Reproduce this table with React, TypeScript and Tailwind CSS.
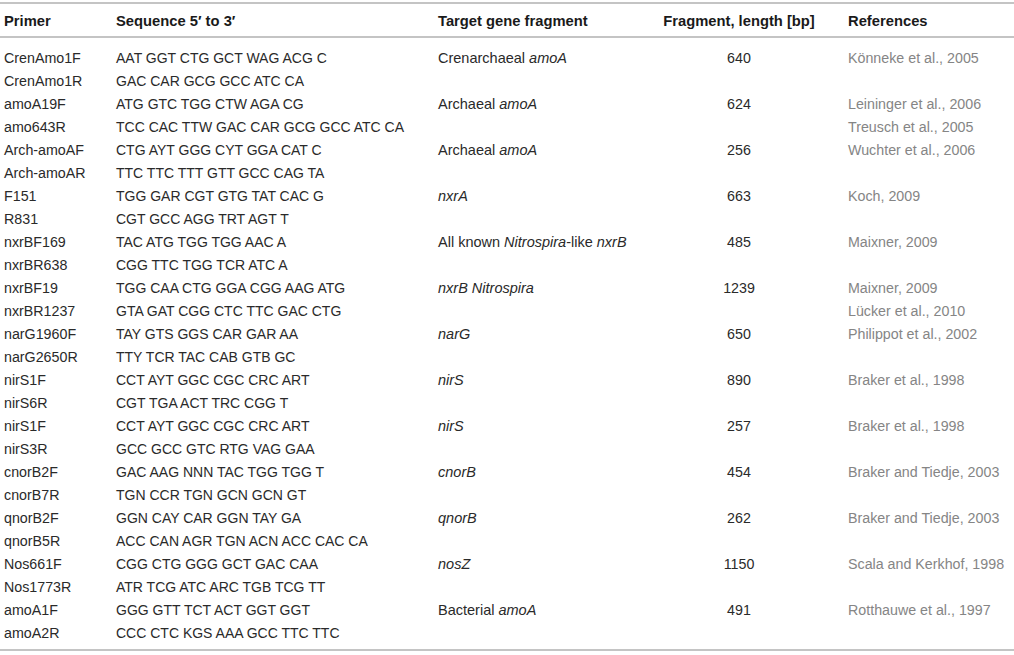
import React from "react";

type Row = {
  primer: string;
  seq: string;
  target?: React.ReactNode;
  len?: string;
  ref?: string;
};

const rows: Row[] = [
  { primer: "CrenAmo1F", seq: "AAT GGT CTG GCT WAG ACG C", target: <>Crenarchaeal <i>amoA</i></>, len: "640", ref: "Könneke et al., 2005" },
  { primer: "CrenAmo1R", seq: "GAC CAR GCG GCC ATC CA" },
  { primer: "amoA19F", seq: "ATG GTC TGG CTW AGA CG", target: <>Archaeal <i>amoA</i></>, len: "624", ref: "Leininger et al., 2006" },
  { primer: "amo643R", seq: "TCC CAC TTW GAC CAR GCG GCC ATC CA", ref: "Treusch et al., 2005" },
  { primer: "Arch-amoAF", seq: "CTG AYT GGG CYT GGA CAT C", target: <>Archaeal <i>amoA</i></>, len: "256", ref: "Wuchter et al., 2006" },
  { primer: "Arch-amoAR", seq: "TTC TTC TTT GTT GCC CAG TA" },
  { primer: "F151", seq: "TGG GAR CGT GTG TAT CAC G", target: <i>nxrA</i>, len: "663", ref: "Koch, 2009" },
  { primer: "R831", seq: "CGT GCC AGG TRT AGT T" },
  { primer: "nxrBF169", seq: "TAC ATG TGG TGG AAC A", target: <>All known <i>Nitrospira</i>-like <i>nxrB</i></>, len: "485", ref: "Maixner, 2009" },
  { primer: "nxrBR638", seq: "CGG TTC TGG TCR ATC A" },
  { primer: "nxrBF19", seq: "TGG CAA CTG GGA CGG AAG ATG", target: <i>nxrB Nitrospira</i>, len: "1239", ref: "Maixner, 2009" },
  { primer: "nxrBR1237", seq: "GTA GAT CGG CTC TTC GAC CTG", ref: "Lücker et al., 2010" },
  { primer: "narG1960F", seq: "TAY GTS GGS CAR GAR AA", target: <i>narG</i>, len: "650", ref: "Philippot et al., 2002" },
  { primer: "narG2650R", seq: "TTY TCR TAC CAB GTB GC" },
  { primer: "nirS1F", seq: "CCT AYT GGC CGC CRC ART", target: <i>nirS</i>, len: "890", ref: "Braker et al., 1998" },
  { primer: "nirS6R", seq: "CGT TGA ACT TRC CGG T" },
  { primer: "nirS1F", seq: "CCT AYT GGC CGC CRC ART", target: <i>nirS</i>, len: "257", ref: "Braker et al., 1998" },
  { primer: "nirS3R", seq: "GCC GCC GTC RTG VAG GAA" },
  { primer: "cnorB2F", seq: "GAC AAG NNN TAC TGG TGG T", target: <i>cnorB</i>, len: "454", ref: "Braker and Tiedje, 2003" },
  { primer: "cnorB7R", seq: "TGN CCR TGN GCN GCN GT" },
  { primer: "qnorB2F", seq: "GGN CAY CAR GGN TAY GA", target: <i>qnorB</i>, len: "262", ref: "Braker and Tiedje, 2003" },
  { primer: "qnorB5R", seq: "ACC CAN AGR TGN ACN ACC CAC CA" },
  { primer: "Nos661F", seq: "CGG CTG GGG GCT GAC CAA", target: <i>nosZ</i>, len: "1150", ref: "Scala and Kerkhof, 1998" },
  { primer: "Nos1773R", seq: "ATR TCG ATC ARC TGB TCG TT" },
  { primer: "amoA1F", seq: "GGG GTT TCT ACT GGT GGT", target: <>Bacterial <i>amoA</i></>, len: "491", ref: "Rotthauwe et al., 1997" },
  { primer: "amoA2R", seq: "CCC CTC KGS AAA GCC TTC TTC" },
];

const cols = "grid grid-cols-[116px_321px_222px_160px_1fr]";

export default function App() {
  return (
    <div className="w-[1014px] h-[655px] bg-white pt-[2px] text-[14px] text-[#2a2a2a] font-['Liberation_Sans',Arial,sans-serif]">
      <div className="border-t-2 border-b-2 border-[#c4c4c4]">
        <div className={`${cols} h-[34px] pt-[2px] items-center text-[14.75px] font-bold text-[#1a1a1a] border-b-2 border-[#c4c4c4]`}>
          <div className="pl-[4px]">Primer</div>
          <div>Sequence 5′ to 3′</div>
          <div className="pl-px">Target gene fragment</div>
          <div className="text-center">Fragment, length [bp]</div>
          <div className="pl-[29px]">References</div>
        </div>
        <div className="pt-[9px] pb-[4px]">
          {rows.map((r, i) => (
            <div key={i} className={`${cols} h-[23px] items-center`}>
              <div className="pl-[4px] text-[14.25px]">{r.primer}</div>
              <div>{r.seq}</div>
              <div className="pl-px text-[14.5px]">{r.target}</div>
              <div className="text-center text-[14.25px]">{r.len}</div>
              <div className="pl-[29px] text-[14.25px] text-[#858585]">{r.ref}</div>
            </div>
          ))}
        </div>
      </div>
    </div>
  );
}
